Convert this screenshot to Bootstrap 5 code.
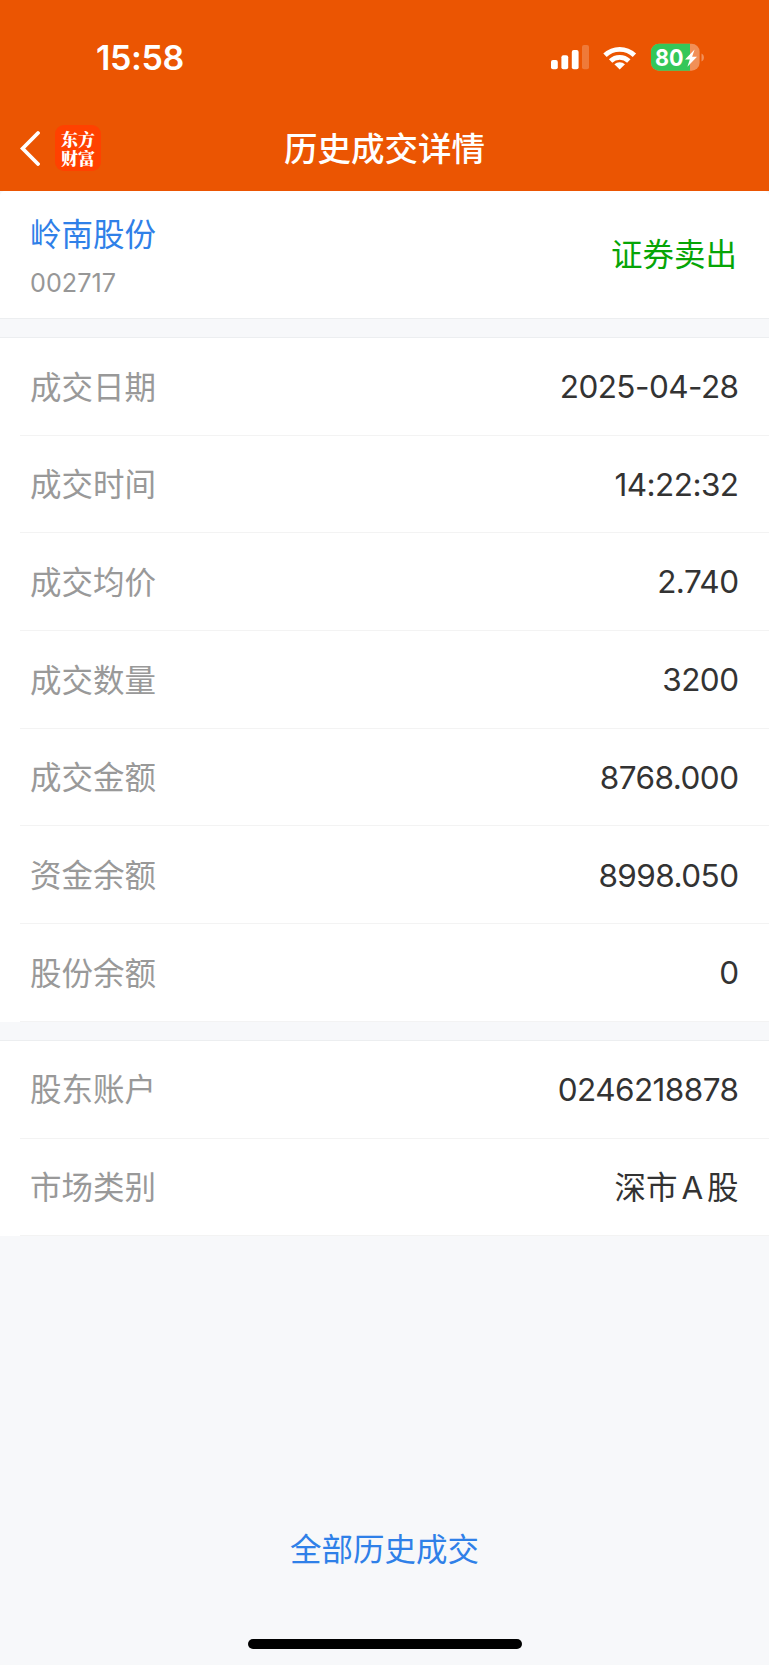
<!DOCTYPE html>
<html lang="zh-CN">
<head>
<meta charset="utf-8">
<meta name="viewport" content="width=device-width, initial-scale=1">
<title>历史成交详情</title>
<link href="https://cdn.jsdelivr.net/npm/bootstrap@5.3.0/dist/css/bootstrap.min.css" rel="stylesheet">
<style>
body{font-family:Inter,"Noto Sans CJK SC",sans-serif;background:#f7f8fa;color:#333;font-size:31.5px;line-height:1}
.screen{height:1665px}
.top{background:#eb5502;height:191px}
.status{height:115px;padding:0 65px 0 96px}
.clock{font-weight:600;font-size:34px;letter-spacing:-.4px}
.titlebar{height:66px;padding:0 20px}
.side{width:120px}
.logo{width:46px;height:46px;border-radius:9px;background:#ff4100;font:900 17px/1 "Noto Serif CJK SC","Noto Sans CJK SC",serif;margin-left:15px;padding-bottom:1px}
.logo span{height:19px;line-height:19px}
.heading{font-size:33.5px;font-weight:500;padding-top:2px}
.stock{height:127px;padding:0 30px;border-radius:5px 5px 0 0}
.blue{color:#2f80e8}
.code{font-size:25.2px;color:#979797;margin-top:20px}
.stock-id{padding-top:6px}
.sell{color:#06a506;margin-right:2px}
.gap-band{height:20px;border-top:1px solid #eceef0;border-bottom:1px solid #eceef0}
.gap-inset{height:19px;border-bottom:1px solid #eceef0}
.item{height:97.7px;padding-right:30px;margin-left:20px;padding-left:10px;border-bottom:1px solid #f3f3f3}
.item .key{color:#999;padding-top:2px}
.val{letter-spacing:-.55px;padding-top:1px;margin-right:.5px}
.val.market{word-spacing:-5px;letter-spacing:0;padding-top:2px}
.footer-area{margin-top:auto;height:131px}
.homebar{width:274px;height:10px;border-radius:5px;background:#000}
</style>
</head>
<body>
<div class="screen d-flex flex-column">
  <header class="top text-white">
    <div class="status d-flex align-items-center justify-content-between">
      <span class="clock">15:58</span>
      <svg width="156" height="36" viewBox="548 40 156 36" fill="#fff">
        <rect x="551" y="60" width="6.8" height="9.3" rx="2"/><rect x="561.4" y="55.3" width="6.8" height="14" rx="2"/><rect x="571.8" y="50" width="6.8" height="19.3" rx="2"/><rect x="582" y="45" width="7" height="24.3" rx="2" opacity=".22"/>
        <g fill="none" stroke="#fff" stroke-width="4.8"><path d="M605 55.3a21 21 0 0 1 29.4 0"/><path d="M610.6 61a13 13 0 0 1 18.2 0"/></g><path d="M614.4 64.2a8 8 0 0 1 10.6 0l-5.3 5.3z"/>
        <clipPath id="cell"><rect x="651" y="43.7" width="48.6" height="27" rx="8"/></clipPath>
        <g clip-path="url(#cell)"><path fill="#f19058" d="M650 43h50v28h-50z"/><path fill="#34c759" d="M650 43h40v28h-40z"/></g>
        <path d="M701.5 53.6c3.2 1.2 3.2 6.8 0 8z" opacity=".35"/>
        <text x="655" y="65.6" font-family="Inter" font-size="23.5" font-weight="700" textLength="28.5" lengthAdjust="spacingAndGlyphs">80</text>
        <path d="M694.6 49.5l-9.6 9.9h4.8l-2.4 7.4 9.6-10.1h-4.9z"/>
      </svg>
    </div>
    <div class="titlebar d-flex align-items-center justify-content-between">
      <div class="side d-flex align-items-center">
        <svg width="20" height="36" viewBox="0 0 20 36" fill="none" stroke="#fff" stroke-width="3.8" stroke-linecap="round"><path d="M18 3L2.6 18.5 18 34"/></svg>
        <div class="logo d-flex flex-column align-items-center justify-content-center"><span>东方</span><span>财富</span></div>
      </div>
      <h1 class="heading m-0">历史成交详情</h1>
      <div class="side"></div>
    </div>
  </header>
  <section class="stock bg-white d-flex align-items-center justify-content-between">
    <div class="stock-id"><div class="blue">岭南股份</div><div class="code">002717</div></div>
    <div class="sell">证券卖出</div>
  </section>
  <div class="gap-band"></div>
  <section class="bg-white">
    <div class="item d-flex align-items-center justify-content-between"><span class="key">成交日期</span><span class="val">2025-04-28</span></div>
    <div class="item d-flex align-items-center justify-content-between"><span class="key">成交时间</span><span class="val">14:22:32</span></div>
    <div class="item d-flex align-items-center justify-content-between"><span class="key">成交均价</span><span class="val">2.740</span></div>
    <div class="item d-flex align-items-center justify-content-between"><span class="key">成交数量</span><span class="val">3200</span></div>
    <div class="item d-flex align-items-center justify-content-between"><span class="key">成交金额</span><span class="val">8768.000</span></div>
    <div class="item d-flex align-items-center justify-content-between"><span class="key">资金余额</span><span class="val">8998.050</span></div>
    <div class="item d-flex align-items-center justify-content-between"><span class="key">股份余额</span><span class="val">0</span></div>
  </section>
  <div class="gap-inset"></div>
  <section class="bg-white">
    <div class="item d-flex align-items-center justify-content-between"><span class="key">股东账户</span><span class="val">0246218878</span></div>
    <div class="item d-flex align-items-center justify-content-between"><span class="key">市场类别</span><span class="val market">深市 A 股</span></div>
  </section>
  <footer class="footer-area d-flex flex-column align-items-center justify-content-between">
    <a href="#" class="blue text-decoration-none">全部历史成交</a>
    <div class="homebar mb-3"></div>
  </footer>
</div>
<script src="https://cdn.jsdelivr.net/npm/bootstrap@5.3.0/dist/js/bootstrap.bundle.min.js"></script>
</body>
</html>
